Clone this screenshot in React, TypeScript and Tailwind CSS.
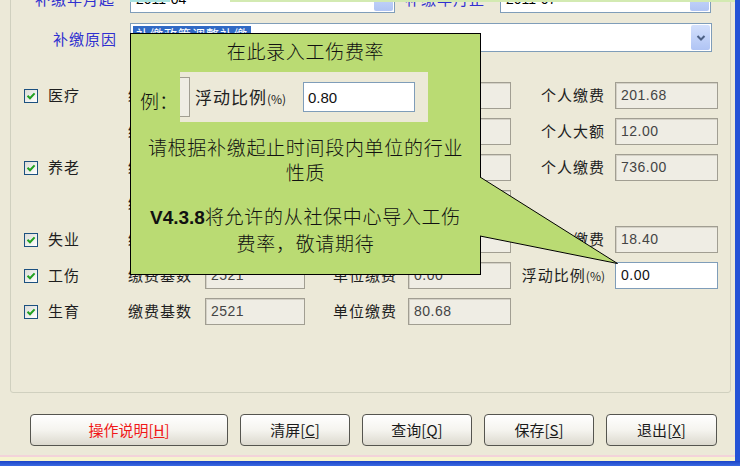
import React from "react";

const CJK = "font-['Noto_Sans_CJK_SC',sans-serif]";

function Check({ label }: { label?: string }) {
  return (
    <div className="flex items-center pl-[13px] w-[117px] shrink-0">
      {label ? (
        <>
          <div className="w-[14px] h-[14px] border border-[#1c5180] bg-linear-to-br from-[#dcdcd7] to-white flex items-center justify-center">
            <svg width="10" height="10" viewBox="0 0 10 10">
              <path d="M1.5 4.8 L4 7.3 L8.6 2.4" fill="none" stroke="#21a121" strokeWidth="2" />
            </svg>
          </div>
          <span className="ml-[10px] text-[15px] tracking-[1px] text-[#1e1e1e]">{label}</span>
        </>
      ) : null}
    </div>
  );
}

function Field({ w, value, white }: { w: string; value?: string; white?: boolean }) {
  return (
    <div
      className={`${w} h-[27px] shrink-0 flex items-center pl-[5px] text-[14px] tracking-[0.5px] font-['Liberation_Sans',sans-serif] ${
        white
          ? "bg-white border border-[#7f9db9] text-[#111]"
          : "bg-[#efede4] border border-[#a19e92] shadow-[inset_1px_1px_0_#d4d1c6] text-[#444]"
      }`}
    >
      {value}
    </div>
  );
}

function Label({ w, text, right, pr }: { w: string; text: React.ReactNode; right?: boolean; pr?: string }) {
  return (
    <div className={`${w} shrink-0 text-[15px] tracking-[1px] text-[#1e1e1e] ${right ? "text-right" : "text-left"} ${pr ?? ""}`}>
      {text}
    </div>
  );
}

function Chevron() {
  return (
    <div className="w-[19px] h-full rounded-[2px] bg-linear-to-b from-[#d3e0fc] to-[#b0c4f4] flex items-center justify-center">
      <svg width="10" height="8" viewBox="0 0 10 8">
        <path d="M1.5 2 L5 5.5 L8.5 2" fill="none" stroke="#4d6185" strokeWidth="2" />
      </svg>
    </div>
  );
}

function Btn({ w, label, k, red }: { w: string; label: string; k: string; red?: boolean }) {
  return (
    <div
      className={`${w} h-[32px] shrink-0 rounded-[4px] border border-[#55554f] bg-linear-to-b from-white via-[#f5f4ef] to-[#dcd9ce] flex items-center justify-center text-[15px] ${
        red ? "text-[#f01818]" : "text-[#1a1a1a]"
      }`}
    >
      {label}[<span className="underline">{k}</span>]
    </div>
  );
}

type Row = {
  check?: string;
  l1?: string;
  f1?: boolean;
  v1?: string;
  l2?: string;
  f2?: boolean;
  v2?: string;
  l3?: React.ReactNode;
  f3?: boolean;
  v3?: string;
  w3?: boolean;
};

const rows: Row[] = [
  { check: "医疗", l1: "缴费基数", f1: true, l2: "单位缴费", f2: true, l3: "个人缴费", f3: true, v3: "201.68" },
  { l1: "缴费基数", f1: true, l2: "单位缴费", f2: true, l3: "个人大额", f3: true, v3: "12.00" },
  { check: "养老", l1: "缴费基数", f1: true, l2: "单位缴费", f2: true, l3: "个人缴费", f3: true, v3: "736.00" },
  { l1: "缴费基数", f1: true, l2: "单位缴费", f2: true },
  { check: "失业", l1: "缴费基数", f1: true, l2: "单位缴费", f2: true, l3: "个人缴费", f3: true, v3: "18.40" },
  {
    check: "工伤",
    l1: "缴费基数",
    f1: true,
    v1: "2521",
    l2: "单位缴费",
    f2: true,
    v2: "0.00",
    l3: (
      <span>
        浮动比例<span className="text-[12px] tracking-normal">(%)</span>
      </span>
    ),
    f3: true,
    v3: "0.00",
    w3: true,
  },
  { check: "生育", l1: "缴费基数", f1: true, v1: "2521", l2: "单位缴费", f2: true, v2: "80.68" },
];

export default function App() {
  return (
    <div className={`w-[740px] h-[466px] relative overflow-hidden bg-[#ece9d8] ${CJK}`}>
      <div className="flex flex-col h-full">
        <div className="flex h-[455px]">
          {/* main column */}
          <div className="w-[735px] shrink-0 flex flex-col">
            {/* group box */}
            <div className="ml-[10px] w-[721px] -mt-[20px] h-[413px] shrink-0 border border-[#d0d0bf] rounded-[3px] flex flex-col">
              {/* top row */}
              <div className="mt-[4px] h-[28px] flex items-center shrink-0">
                <div className="w-[108px] pr-[4px] text-right text-[15px] tracking-[1px] text-[#3030d0]">补缴年月起</div>
                <div className="ml-[11px] w-[265px] h-full bg-white border border-[#7f9db9] flex items-center justify-between p-[1px]">
                  <span className="pl-[4px] text-[14px] font-['Liberation_Sans',sans-serif] text-black">2011-04</span>
                  <Chevron />
                </div>
                <div className="w-[105px] pr-[15px] text-right text-[15px] tracking-[1px] text-[#3030d0]">补缴年月止</div>
                <div className="w-[211px] h-full bg-white border border-[#7f9db9] flex items-center justify-between p-[1px]">
                  <span className="pl-[4px] text-[14px] font-['Liberation_Sans',sans-serif] text-black">2011-07</span>
                  <Chevron />
                </div>
              </div>
              {/* reason row */}
              <div className="mt-[10px] h-[29px] flex items-center shrink-0">
                <div className="w-[108px] pr-[2px] text-right text-[15px] tracking-[1px] text-[#3030d0] pt-[3px]">补缴原因</div>
                <div className="ml-[11px] w-[582px] h-full bg-white border border-[#7f9db9] flex items-stretch justify-between p-[1px]">
                  <div className="pt-[1px] pl-[1px]">
                    <span className="block bg-[#316ac5] text-white text-[13px] leading-[16px] px-[3px] tracking-[1px]">补缴政策调整补缴</span>
                  </div>
                  <Chevron />
                </div>
              </div>
              {/* data rows */}
              <div className="mt-[30px] flex flex-col gap-[9px]">
                {rows.map((r, i) => (
                  <div key={i} className="h-[27px] flex items-center">
                    <Check label={r.check} />
                    <Label w="w-[77px]" text={r.l1} />
                    {r.f1 ? <Field w="w-[100px]" value={r.v1} /> : <div className="w-[100px] shrink-0" />}
                    <Label w="w-[103px]" text={r.l2} right pr="pr-[11px]" />
                    {r.f2 ? <Field w="w-[103px]" value={r.v2} /> : <div className="w-[103px] shrink-0" />}
                    <Label w="w-[104px]" text={r.l3} right pr="pr-[10px]" />
                    {r.f3 ? <Field w="w-[103px]" value={r.v3} white={r.w3} /> : null}
                  </div>
                ))}
              </div>
            </div>
            {/* buttons */}
            <div className="mt-[21px] pl-[30px] flex gap-[12px]">
              <Btn w="w-[198px]" label="操作说明" k="H" red />
              <Btn w="w-[110px]" label="清屏" k="C" />
              <Btn w="w-[110px]" label="查询" k="Q" />
              <Btn w="w-[110px]" label="保存" k="S" />
              <Btn w="w-[111px]" label="退出" k="X" />
            </div>
          </div>
          <div className="w-[5px] bg-[#2453d6]" />
        </div>
        <div className="flex h-[6px]">
          <div className="w-[735px] flex flex-col">
            <div className="h-[2px] bg-[#f3d3da]" />
            <div className="h-[4px] bg-[#f6f4cf]" />
          </div>
          <div className="w-[5px] bg-[#2453d6]" />
        </div>
        <div className="h-[5px] bg-linear-to-b from-[#1c44c8] to-[#3b6ae0]" />
      </div>

      {/* faint strips at top edge */}
      <div className="absolute top-0 left-[130px] w-[40px] h-[2px] bg-[#a9e2df]" />
      <div className="absolute top-0 left-[230px] right-[5px] h-[2px] bg-[#d3eab2]" />

      {/* callout */}
      <div className="absolute left-[130px] top-[33px] w-[351px] h-[242px] border border-black bg-[#badb73] flex flex-col items-center text-[19px] font-light tracking-[0.7px] leading-[25px] text-[#111]">
        <div className="mt-[4px]">在此录入工伤费率</div>
        <div className="mt-[9px] w-full flex items-center">
          <span className="ml-[9px] pt-[6px] tracking-normal">例：</span>
          <div className="ml-[2px] w-[248px] h-[50px] bg-[#ece9d8] flex items-center tracking-normal font-normal">
            <div className="w-[10px] h-[40px] border-r border-y border-[#a19e92] bg-[#efede4]" />
            <div className="ml-[5px] text-[17px] tracking-[1px] text-[#222]">
              浮动比例<span className="text-[12px] tracking-normal">(%)</span>
            </div>
            <div className="ml-auto mr-[13px] w-[112px] h-[30px] bg-white border border-[#7f9db9] flex items-center pl-[4px] text-[15px] font-['Liberation_Sans',sans-serif] text-[#111]">
              0.80
            </div>
          </div>
        </div>
        <div className="mt-[12px]">请根据补缴起止时间段内单位的行业</div>
        <div>性质</div>
        <div className="mt-[19px]">
          <span className="font-bold font-['Liberation_Sans',sans-serif] tracking-normal">V4.3.8</span>将允许的从社保中心导入工伤
        </div>
        <div>费率，敬请期待</div>
      </div>
      <svg className="absolute left-[480px] top-[176px]" width="140" height="92" viewBox="0 0 140 92">
        <polygon points="0,1 137.5,87.5 0,60" fill="#badb73" />
        <polyline points="0,1 137.5,87.5 0,60" fill="none" stroke="#000" strokeWidth="1" />
      </svg>
    </div>
  );
}
